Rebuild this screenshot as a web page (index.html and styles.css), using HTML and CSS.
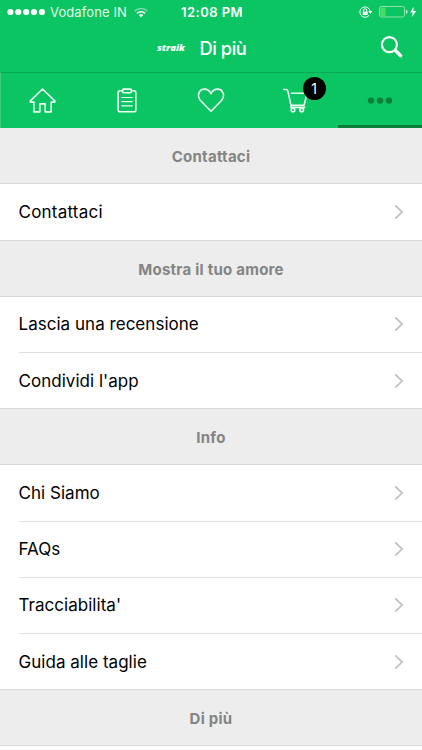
FILE: index.html
```html
<!DOCTYPE html>
<html lang="it">
<head>
<meta charset="utf-8">
<title>Di più</title>
<link rel="stylesheet" href="styles.css">
</head>
<body>
<header class="top">
  <div class="status">
    <div class="carrier">
      <svg class="signal" width="38" height="8" viewBox="0 0 38 8" fill="#fff"><circle cx="3.4" cy="4" r="3.1"/><circle cx="11.3" cy="4" r="3.1"/><circle cx="19.2" cy="4" r="3.1"/><circle cx="27" cy="4" r="3.1"/><circle cx="34.9" cy="4" r="3.1"/></svg>
      <span class="carrier-name">Vodafone IN</span>
      <svg class="wifi" width="14" height="11" viewBox="0 0 14 11" fill="none" stroke="#fff" stroke-width="1.5"><path d="M.7 4.1a9.2 9.2 0 0 1 12.6 0" opacity=".45"/><path d="M2.9 6.4a6 6 0 0 1 8.2 0"/><path d="M4.7 8.1a3.5 3.5 0 0 1 4.6 0L7 10.5z" fill="#fff" stroke="none"/></svg>
    </div>
    <div class="clock">12:08 PM</div>
    <div class="power">
      <svg width="58" height="14" viewBox="0 0 58 14" fill="none"><path d="M10.1 10.4A5.2 5.2 0 1 1 11.2 6.2" stroke="#fff" stroke-width="1"/><path d="M9.3 6h4.1l-2 2.7z" fill="#fff"/><path d="M3.7 6.6h5V10h-5z" fill="#fff"/><path d="M4.7 6.8V5.2a1.5 1.5 0 0 1 3 0v1.6" stroke="#fff"/><rect x="20.5" y="1.5" width="25" height="10.5" rx="2" stroke="#8fe3a5"/><path d="M21.5 2.5h5v8.5h-5z" fill="#4cd964"/><path d="M47 4.8q1.5 0 1.5 2t-1.5 2z" fill="#dbf7e2"/><path d="M54.5 1.7 51.2 7.5h2.6l-1.2 4.7 4.6-6.2h-2.7z" fill="#fff"/></svg>
    </div>
  </div>
  <div class="title-bar">
    <span class="brand">straik</span>
    <h1>Di più</h1>
    <svg class="search" width="24" height="24" viewBox="0 0 24 24" fill="none" stroke="#fff"><circle cx="9.4" cy="8.6" r="7.5" stroke-width="2.1"/><path d="m15.6 14.8 5 4.9" stroke-width="3.4" stroke-linecap="round"/></svg>
  </div>
</header>
<nav class="tabs">
  <a class="tab"><svg width="28" height="26" viewBox="0.5 0.3 28 26"><path d="M14 1.3 1.8 13.1v1.3h3.6v9.8h6v-8h5.3v8h6v-9.8h3.6v-1.3z"/></svg></a>
  <a class="tab"><svg width="20" height="26" viewBox="0 0.2 20 26"><path d="M5.5 2.9H3A1.8 1.8 0 0 0 1.2 4.7v17.5A1.8 1.8 0 0 0 3 24h14a1.8 1.8 0 0 0 1.8-1.8V4.7A1.8 1.8 0 0 0 17 2.9h-2.5"/><rect x="5.6" y="1.3" width="8.8" height="3.7" rx="1"/><path d="M4.8 9.7h10.4M4.8 13.8h10.4M4.8 18h10.4" stroke-width="1.2"/></svg></a>
  <a class="tab"><svg width="28" height="26" viewBox="0 0.8 28 26"><path d="M14 24 3.5 13.3C-.6 8.6 2.1 1.9 7.4 1.9c3.2 0 5.3 1.8 6.6 4.5 1.3-2.7 3.4-4.5 6.6-4.5 5.3 0 8 6.7 3.9 11.4z"/></svg></a>
  <a class="tab"><svg width="28" height="26" viewBox="0 0.4 28 26"><path d="M1.7 1.9h3l1.1 1.4 3.2 14.4h13.1l2.9-12.1H9.4M9 17.7v2.1h13.7"/><circle cx="11" cy="22.3" r="1.8"/><circle cx="19.7" cy="22.3" r="1.8"/></svg><span class="badge">1</span></a>
  <a class="tab active"><svg class="dots" width="28" height="26" viewBox="0 0 28 26"><circle cx="5" cy="12.6" r="3.2"/><circle cx="14" cy="12.6" r="3.2"/><circle cx="23" cy="12.6" r="3.2"/></svg></a>
</nav>
<main class="list">
  <h2>Contattaci</h2>
  <ul>
    <li><span class="wide">Contattaci</span><svg class="chev" viewBox="0 0 10 16"><path d="m1.2 1.3 7 6.7-7 6.7"/></svg></li>
  </ul>
  <h2>Mostra il tuo amore</h2>
  <ul>
    <li><span>Lascia una recensione</span><svg class="chev" viewBox="0 0 10 16"><path d="m1.2 1.3 7 6.7-7 6.7"/></svg></li>
    <li><span>Condividi l'app</span><svg class="chev" viewBox="0 0 10 16"><path d="m1.2 1.3 7 6.7-7 6.7"/></svg></li>
  </ul>
  <h2>Info</h2>
  <ul>
    <li><span>Chi Siamo</span><svg class="chev" viewBox="0 0 10 16"><path d="m1.2 1.3 7 6.7-7 6.7"/></svg></li>
    <li><span>FAQs</span><svg class="chev" viewBox="0 0 10 16"><path d="m1.2 1.3 7 6.7-7 6.7"/></svg></li>
    <li><span>Tracciabilita'</span><svg class="chev" viewBox="0 0 10 16"><path d="m1.2 1.3 7 6.7-7 6.7"/></svg></li>
    <li><span>Guida alle taglie</span><svg class="chev" viewBox="0 0 10 16"><path d="m1.2 1.3 7 6.7-7 6.7"/></svg></li>
  </ul>
  <h2>Di più</h2>
</main>
</body>
</html>
```
FILE: styles.css
```css
* { box-sizing: border-box; }
body { margin: 0; background: #fff; color: #000; font-family: Inter, "Liberation Sans", sans-serif; }
svg { display: block; flex: none; }

.top { height: 72px; background: #0ac562; color: #fff; }
.status { height: 24px; display: grid; grid-template-columns: 1fr auto 1fr; align-items: center; padding: 0 5px 0 7px; }
.carrier { display: flex; align-items: center; height: 24px; }
.carrier-name { margin-left: 5px; font-size: 13px; letter-spacing: .1px; line-height: 24px; color: #e2f9ea; }
.wifi { margin-left: 7px; }
.clock { font-size: 13px; font-weight: 600; letter-spacing: .45px; line-height: 24px; }
.power { display: flex; justify-content: flex-end; }

.title-bar { height: 48px; display: flex; align-items: center; padding: 0 18.5px 0 157px; }
.brand { width: 42.5px; font: italic 800 9.5px/14px "Open Sans", sans-serif; letter-spacing: 0; }
h1 { margin: 0; font-size: 18.3px; font-weight: 500; letter-spacing: -.45px; line-height: 48px; }
.search { margin-left: auto; }

.tabs { height: 56.3px; display: grid; grid-template-columns: repeat(5, 1fr); background: #0ac562; border-top: 1px solid #0aa956; border-left: 1px solid #3fca7e; }
.tab { position: relative; display: flex; align-items: center; justify-content: center; }
.tab svg { fill: none; stroke: #e9fff1; stroke-width: 1.6; stroke-linejoin: round; stroke-linecap: round; }
.tab.active { border-bottom: 3px solid #0b7d38; padding-top: 3px; }
.tab .dots { fill: #0b8038; stroke: none; }
.badge { position: absolute; left: 49px; top: 3.5px; width: 23px; height: 23px; border-radius: 50%; background: #000; color: #fff; font-size: 14px; line-height: 23px; text-align: center; }

.list h2 { height: 56.2px; margin: 0; background: #ededed; border-bottom: 1px solid #d9d9db; color: #848484; font-size: 15px; font-weight: 700; line-height: 57px; letter-spacing: .25px; text-align: center; }
.list ul { margin: 0; padding: 0 0 0 18.5px; list-style: none; border-bottom: 1px solid #d9d9db; }
.list li { height: 56.2px; display: flex; align-items: center; justify-content: space-between; padding-right: 18.3px; border-bottom: 1px solid #dfdfe1; font-size: 17px; letter-spacing: .03px; }
.list li:last-child { height: 55.2px; border-bottom: 0; }
.list .wide { letter-spacing: .23px; }
.chev { width: 10px; height: 16px; fill: none; stroke: #c3c3c7; stroke-width: 1.8; }
```
